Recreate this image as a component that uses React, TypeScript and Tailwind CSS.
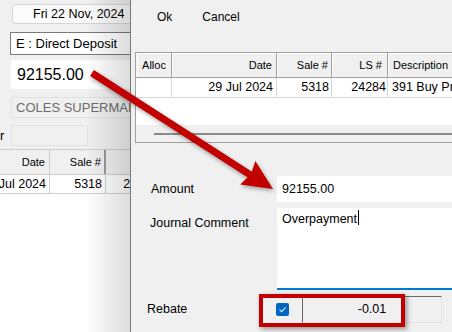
import React from "react";

const font = { fontFamily: '"Liberation Sans", Arial, sans-serif' };

function LeftWindow() {
  return (
    <div className="relative h-full w-[130px] shrink-0 overflow-hidden bg-[#f0f0f0]">
      <div className="flex h-full w-[220px] flex-col pt-[4px]">
        <div className="ml-[12px] flex h-[20px] w-[140px] items-center rounded-[3px] border border-[#d6d6d6] bg-[#fbfbfb] pl-[20px] text-[12.5px] text-black">
          Fri 22 Nov, 2024
        </div>
        <div className="ml-[10px] mt-[8px] flex h-[23px] w-[160px] items-center border border-[#7a7a7a] bg-white pl-[5px] text-[13px] text-black">
          E : Direct Deposit
        </div>
        <div className="ml-[11px] mt-[5px] flex h-[29px] w-[160px] items-center bg-white pl-[6px] text-[16px] text-black">
          92155.00
        </div>
        <div className="ml-[11px] mt-[8px] flex h-[21px] w-[160px] items-center overflow-hidden border border-[#e0e0e0] bg-[#f0f0f0] pl-[4px] text-[13px] text-[#6d6d6d]">
          COLES SUPERMARKETS
        </div>
        <div className="mt-[7px] flex h-[21px] items-center">
          <span className="w-[11px] text-[13px] text-black">r</span>
          <div className="h-[21px] w-[77px] border border-[#e3e3e3]" />
        </div>
        <div className="mt-[3px] flex flex-1 flex-col border-t border-[#cfcfcf]">
          <div className="flex h-[25px] border-b border-[#cfcfcf] bg-[#f0f0f0] text-[11px] text-black">
            <div className="flex w-[50px] shrink-0 items-center justify-end border-r border-[#cfcfcf] pr-[4px]">Date</div>
            <div className="flex w-[56px] shrink-0 items-center justify-end border-r-2 border-[#9a9a9a] pr-[3px]">Sale #</div>
            <div className="flex w-[56px] shrink-0 items-center justify-end border-r border-[#cfcfcf] pr-[3px]">LS #</div>
          </div>
          <div className="flex h-[19px] border-b border-[#cfcfcf] bg-white text-[12.5px] text-black">
            <div className="flex w-[50px] shrink-0 items-center justify-end border-r border-[#cfcfcf] pr-[3px]">29 Jul 2024</div>
            <div className="flex w-[56px] shrink-0 items-center justify-end border-r border-[#cfcfcf] pr-[3px]">5318</div>
            <div className="flex w-[56px] shrink-0 items-center justify-end border-r border-[#cfcfcf] pr-[3px]">24284</div>
          </div>
          <div className="flex-1 bg-white" />
        </div>
      </div>
    </div>
  );
}

function HeaderCell({ w, children, align = "end", pad = "" }: { w: string; children?: React.ReactNode; align?: string; pad?: string }) {
  return (
    <div
      className={`flex h-full shrink-0 items-center border-r border-[#a0a0a0] shadow-[inset_1px_1px_0_#ffffff] ${w} ${
        align === "end" ? "justify-end" : align === "center" ? "justify-center" : "justify-start"
      } ${pad}`}
    >
      {children}
    </div>
  );
}

function DataCell({ w, children, align = "end", pad = "" }: { w: string; children?: React.ReactNode; align?: string; pad?: string }) {
  return (
    <div
      className={`flex h-full shrink-0 items-center border-r border-[#d9d9d9] ${w} ${
        align === "end" ? "justify-end" : "justify-start"
      } ${pad}`}
    >
      {children}
    </div>
  );
}

function Dialog() {
  return (
    <div className="relative flex h-full flex-1 flex-col border-l border-[#8e8e8e] bg-[#f0f0f0]">
      <div className="pointer-events-none absolute bottom-0 right-full top-0 w-[45px] bg-linear-to-r from-[rgba(0,0,0,0)] to-[rgba(0,0,0,0.14)]" />
      <div className="flex h-[52px] shrink-0 flex-col overflow-hidden">
        <div className="flex h-[34px] items-center text-[12px] text-black">
          <span className="ml-[26px]">Ok</span>
          <span className="ml-[30px]">Cancel</span>
        </div>
      </div>
      <div className="ml-[4px] flex h-[91px] w-[330px] shrink-0 flex-col overflow-hidden border border-[#a0a0a0] bg-white">
        <div className="flex h-[25px] shrink-0 border-b border-[#a0a0a0] bg-[#f0f0f0] pl-[1px] text-[11px] text-black">
          <HeaderCell w="w-[35px]" align="center">Alloc</HeaderCell>
          <HeaderCell w="w-[105px]" pad="pr-[4px]">Date</HeaderCell>
          <HeaderCell w="w-[55px]" pad="pr-[3px]">Sale #</HeaderCell>
          <HeaderCell w="w-[56px]" pad="pr-[5px]">LS #</HeaderCell>
          <HeaderCell w="w-[100px]" align="start" pad="pl-[5px]">Description</HeaderCell>
        </div>
        <div className="flex h-[20px] shrink-0 border-b border-[#d9d9d9] pl-[1px] text-[12.5px] text-black">
          <DataCell w="w-[35px]" />
          <DataCell w="w-[105px]" pad="pr-[3px]">29 Jul 2024</DataCell>
          <DataCell w="w-[55px]" pad="pr-[2px]">5318</DataCell>
          <DataCell w="w-[56px]" pad="pr-[1px]">24284</DataCell>
          <DataCell w="w-[100px]" align="start" pad="pl-[4px]">391 Buy Property</DataCell>
        </div>
        <div className="h-[27px] shrink-0 bg-white" />
        <div className="flex h-[17px] shrink-0 flex-col bg-[#f0f0f0]">
          <div className="ml-[18px] mt-[8px] h-[2px] bg-[#8a8a8a]" />
        </div>
      </div>

      <div className="mt-[33px] flex h-[26px] shrink-0 text-[12.5px] text-black">
        <div className="flex w-[146px] shrink-0 items-center pl-[20px]">Amount</div>
        <div className="flex flex-1 items-center bg-white pl-[5px]">92155.00</div>
      </div>

      <div className="mt-[6px] flex h-[82px] shrink-0 text-[12.5px] leading-[14px] text-black">
        <div className="w-[146px] shrink-0 pl-[19px] pt-[8px]">Journal Comment</div>
        <div className="flex flex-1 items-start border-b-2 border-[#0078d7] bg-white pl-[5px] pt-[4px]">
          <span>Overpayment</span>
          <span className="ml-[1px] mt-[-2px] inline-block h-[15px] w-[1px] bg-black" />
        </div>
      </div>

      <div className="mt-[6px] flex h-[27px] shrink-0 items-center text-[12.5px] text-black">
        <div className="w-[145px] shrink-0 pl-[16px]">Rebate</div>
        <div className="flex h-[13px] w-[13px] shrink-0 items-center justify-center rounded-[2px] bg-[#0067c0]">
          <svg width="9" height="9" viewBox="0 0 9 9">
            <path d="M1.5 4.6 L3.6 6.6 L7.6 2.4" fill="none" stroke="#dfeeff" strokeWidth="1.1" />
          </svg>
        </div>
        <div className="ml-[13px] flex h-[27px] w-[140px] shrink-0 items-center justify-center border border-b-[#e3e3e3] border-l-[#6a6a6a] border-r-[#e3e3e3] border-t-[#6a6a6a] bg-[#f0f0f0]">
          -0.01
        </div>
      </div>
    </div>
  );
}

export default function App() {
  return (
    <div className="relative flex h-[332px] w-[452px] overflow-hidden whitespace-nowrap bg-[#f0f0f0]" style={font}>
      <LeftWindow />
      <Dialog />
      <div className="pointer-events-none absolute left-[259px] top-[294px] h-[33px] w-[146px] border-[4px] border-[#c20000] shadow-[2px_2px_5px_rgba(0,0,0,0.4)]" />
      <svg
        className="pointer-events-none absolute left-0 top-0 drop-shadow-[1px_2px_2px_rgba(0,0,0,0.35)]"
        width="452"
        height="332"
        viewBox="0 0 452 332"
      >
        <line x1="92" y1="73" x2="252" y2="176" stroke="#c20000" strokeWidth="7" />
        <polygon points="273,189 255.4,160.9 251,174 240.2,184.5" fill="#c20000" />
      </svg>
    </div>
  );
}
